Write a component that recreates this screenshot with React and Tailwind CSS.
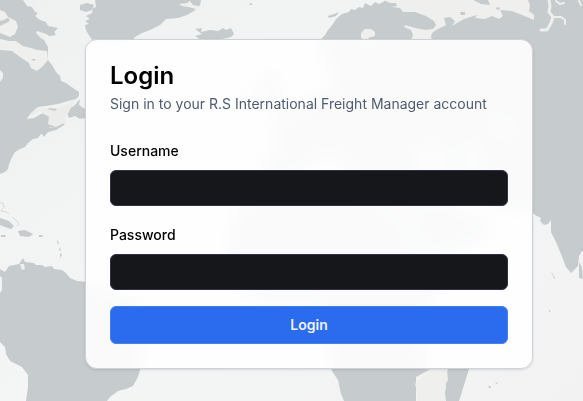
import React from "react";

function WorldMap() {
  return (
    <svg
      className="absolute inset-0 h-full w-full"
      viewBox="0 0 583 401"
      preserveAspectRatio="xMidYMid slice"
      aria-hidden="true"
    >
      <defs>
        <linearGradient id="sea" x1="0" y1="0" x2="1" y2="1">
          <stop offset="0" stopColor="#eff0f0" />
          <stop offset="0.5" stopColor="#f4f5f5" />
          <stop offset="1" stopColor="#f2f2f2" />
        </linearGradient>
      </defs>
      <rect width="583" height="401" fill="url(#sea)" />

      <g fill="#c6cbce">
        {/* North America */}
        <path d="M0 0H23L27 6 32 7 35 12 38 13 35 16 40 20 46 22 48 26 58 28 54 32 56 35 49 36 46 34 40 32 37 31 36 33 44 40 48 47 48 60 52 65 56 72 60 76 61 81 66 83 70 86 76 90 79 92 79 96 76 99 68 101 58 104 46 106 38 107 30 114 27 119 34 118 41 114 47 112 53 113 59 115 63 122 61 127 57 128 50 127 46 131 41 134 38 138 33 139 28 143 25 147 20 149 15 152 12 157 9 164 8 169 5 172 0 174Z" />
        <path d="M66 110L74 106 80 99 79 105 85 109V118L80 119 75 116 69 118Z" />
        <path d="M41 133L46 128 56 127 65 122 64 125 56 130 48 132 44 137Z" />
        {/* Greenland */}
        <path d="M95 0H201L200 5 194 11 187 15 178 18 166 19 160 25 150 30 142 33 135 37 131 42H94L90 37 86 30 85 25 89 24 85 21 90 19 86 16 92 13 93 8 96 7Z" />
        <path d="M80 5L87 3 94 5 92 10 86 12 80 10Z" />
        {/* Iceland */}
        <path d="M195 29L202 28 201 32 210 30 218 31 223 28 226 30 231 28 234 34 231 37 222 39 200 39 195 36 202 34Z" />
        <path d="M249 4L252 3 252 5 250 5Z" />
        {/* Caribbean */}
        <path d="M0 218L9 221 14 226 11 229 5 227 0 225Z M18 231L25 230 33 234 29 237 20 236Z M1 235L6 235 5 237 1 237Z M39 235L43 235 42 237 39 237Z" />
        <path d="M57 240L59 242 58 245Z M60 247L61 251 59 250Z M60 253L62 255 60 258Z" />
        {/* South America */}
        <path d="M0 269L5 272 9 266 19 264 23 258 25 262 34 263 36 265 42 265 45 267 52 266 54 269 62 270 66 273 70 278 77 281 89 282 110 290 136 303 145 318 144 343 141 367 138 377 133 386 126 389 118 391 110 397 107 401H26L28 387 28 375 22 367 10 361 6 354 5 347 0 342V293L2 290 2 278 0 276Z" />
        {/* Europe and Asia */}
        <path d="M320 40L325 35 328 30 333 24 336 19 342 14 349 12 351 9 355 10 359 7 363 8 365 3 371 6 375 2 379 4 383 2 386 0H583V250L579 256 578 266 571 273 566 267 561 254 556 242 551 232 551 220 548 224 544 225 540 221 541 218 535 215 531 211 510 212 493 209 473 190 461 187 440 191 419 183 401 180 390 184 370 177 365 184 350 179 340 160 323 157 306 170 286 180 263 180 257 163 272 154 277 144 268 130 272 120 295 109 314 95 330 88 333 70 324 66 319 55Z" />
        <path d="M260 74L273 70 283 92 284 105 269 109 266 94Z M247 88L259 85 258 100 245 102Z" />
        <path d="M328 16L334 14 339 12 336 16 329 18Z" />
        {/* Africa */}
        <path d="M237 205L255 194 285 188 320 186 342 194 360 198 377 196 397 207 409 233 426 260 449 258 443 284 424 310 419 340 431 369 416 377 416 401H344L341 394 338 380 332 371 329 350 324 320 310 302 272 304 244 294 226 267 229 227Z" />
        <path d="M448 369H469L465 382 459 401H444L446 386 444 378Z" />
        {/* Arabia */}
        <path d="M400 200L450 202 491 226 489 239 462 248 429 257 414 235Z" />
        {/* Islands in the Indian Ocean */}
        <path d="M579 262L582 267 583 279 579 278Z M551 272L553 274 553 276Z M554 275L555 279 553 277Z M549 310L551 311 549 312Z M488 386L491 386 490 389Z M495 383L498 382 497 384Z" />
      </g>

      {/* Open water cut into the continents */}
      <g fill="#efefed">
        <path d="M0 10L5 12 8 17 16 21 18 27 15 34 10 37 0 33V26L4 24 0 20Z" />
        <path d="M0 39L9 41 16 41 23 46 31 48 37 50 47 51 48 60 43 66 37 71 31 68 29 63 20 57 12 51 0 50Z" />
        <path d="M36 32L43 34 46 38 42 39 38 35Z M0 70L3 73 3 78 0 82Z" />
        <path d="M179 4L187 3 190 1 193 5 201 7 197 10 193 8 188 7 182 6Z" />
        <path d="M361 33L365 29 371 29 375 32 375 36 368 38 371 41H364L361 37Z" />
        <path d="M383 0L390 3 396 3 397 6 392 7 400 8 403 12 415 12 426 16 434 21 436 25 433 29 426 30 415 28 405 25 404 27 411 30 413 35 411 40H432L431 36 433 32 438 29 446 25 444 18 450 17 455 21 452 26 462 20 470 17 477 15 475 18 485 19 492 16 499 19 503 16 500 10 512 11 522 15 534 20 534 15 529 11 530 5 528 0Z" />
        <path d="M416 370H431L419 380 415 384 417 391 417 401H446L444 387 448 380 447 369Z" />
        <path d="M419 154L439 150 450 160 438 171 419 168Z M465 146L474 148 480 164 475 176 466 163Z M494 121L507 120 508 132 498 133Z" />
        <path d="M20 264H24L25 269 22 270Z" />
      </g>
      <g fill="#c6cbce">
        <path d="M1 21L8 18 10 20 7 23 2 24Z" />
        <path d="M460 12L465 12 465 15 461 15Z M497 7L500 8 499 10 496 9Z M473 0H488L490 5 481 4Z" />
        <path d="M31 59L36 59 34 61Z" />
      </g>
      <path
        d="M27 118L36 108 47 108 58 108 68 104 76 99 71 108 66 117 66 122 56 127 48 124 49 117 39 111Z"
        fill="#ecedea"
      />
      <path d="M49 108L57 109 55 111 48 109Z" fill="#c6cbce" />
      <g fill="none" stroke="#eeeeec" strokeLinecap="round" strokeLinejoin="round">
        <path strokeWidth="3" d="M541 30L547 30 551 23 553 17 549 12 550 6 549 0" />
        <path strokeWidth="2" d="M553 17L561 17 565 20 565 24 M556 1L560 4 564 3 M579 1L581 5" />
      </g>
      <g fill="none" stroke="#d9dbd9" strokeWidth="1">
        <path d="M0 203L3 203 4 207 1 211 6 212 9 214 M12 217L16 220 19 224 17 226" />
      </g>
    </svg>
  );
}

function Field({ id, label, type, autoComplete }) {
  return (
    <div className="flex flex-col gap-2">
      <div className="leading-6">
        <label htmlFor={id} className="text-sm font-medium text-black">
          {label}
        </label>
      </div>
      <input
        id={id}
        name={id}
        type={type}
        autoComplete={autoComplete}
        className="h-9 w-full rounded-md border border-[#303047] bg-[#15171a] px-3 text-sm text-white outline-none focus:ring-2 focus:ring-blue-500"
      />
    </div>
  );
}

export default function App() {
  return (
    <main className="relative flex min-h-screen items-center justify-center overflow-hidden bg-[#f3f4f4] pt-[7px] pl-[35px] font-['Inter',sans-serif]">
      <WorldMap />
      <section className="relative w-full max-w-md rounded-xl border border-[#cdd1d8] bg-white/90 shadow-sm backdrop-blur-sm">
        <header className="flex flex-col gap-1.5 p-6">
          <h1 className="text-2xl leading-6 font-semibold text-black">Login</h1>
          <p className="text-sm text-[#4f5b6e]">
            Sign in to your R.S International Freight Manager account
          </p>
        </header>
        <form
          className="flex flex-col gap-4 px-6 pb-6"
          onSubmit={(event) => event.preventDefault()}
        >
          <Field id="username" label="Username" type="text" autoComplete="username" />
          <Field
            id="password"
            label="Password"
            type="password"
            autoComplete="current-password"
          />
          <button
            type="submit"
            className="w-full cursor-pointer rounded-md border border-[#4580f3] bg-[#2b6bee] py-2 text-sm font-semibold text-[#eef3fe] hover:bg-[#235fdc]"
          >
            Login
          </button>
        </form>
      </section>
    </main>
  );
}
